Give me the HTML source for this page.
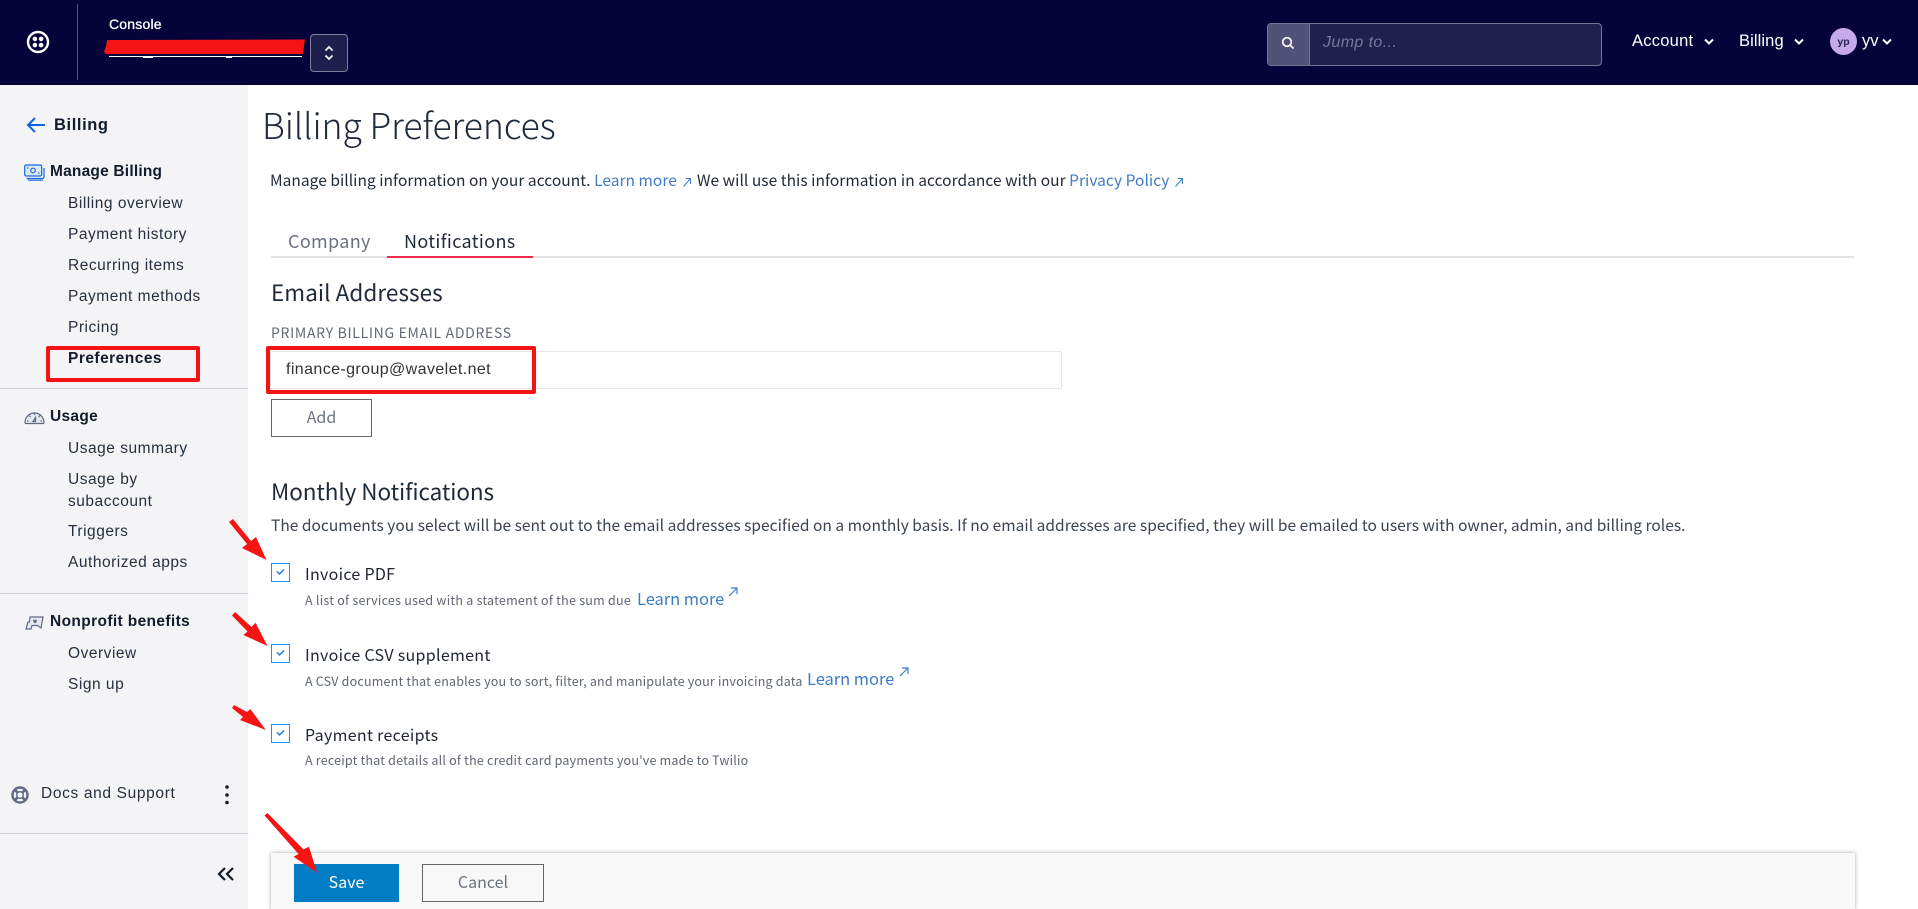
<!DOCTYPE html>
<html lang="en"><head><meta charset="utf-8"><title>Billing Preferences</title>
<style>
html,body{margin:0;padding:0;width:1918px;height:909px;overflow:hidden;background:#fff}
body{position:relative;font-family:"Liberation Sans",sans-serif;color:#121c2d}
.a{position:absolute}
.t{position:absolute;white-space:nowrap;line-height:20px;height:20px}
.side{font-size:15.5px;color:#263040;letter-spacing:.52px;left:68px}
.b{font-weight:700;color:#121c2d}
.m{font-family:"Noto Sans CJK JP","Liberation Sans",sans-serif}
.l{color:#3f7cc4}
.sub{left:305px;font-size:12.5px;color:#5f6670;letter-spacing:.2px}
.chk{left:305px;font-size:16px;color:#1f2630;letter-spacing:.3px}
.cb{position:absolute;left:271px;width:17px;height:17px;border:1px solid #1a94f0;background:#fff}
.ln{position:absolute;left:0;width:248px;height:1px;background:#cfcfdc}
.ar{display:inline-block;vertical-align:-1px}
</style></head><body>
<div class="a" style="left:0;top:0;width:1918px;height:85px;background:#06033a"></div>
<div class="a" style="left:0;top:85px;width:248px;height:824px;background:#f4f4f6"></div>

<svg class="a" style="left:24px;top:28px" width="28" height="28" viewBox="0 0 28 28"><circle cx="14" cy="14" r="10" fill="none" stroke="#fff" stroke-width="2.4"/><circle cx="10.900" cy="10.900" r="2.300" fill="#fff"/><circle cx="17.100" cy="10.900" r="2.300" fill="#fff"/><circle cx="10.900" cy="17.100" r="2.300" fill="#fff"/><circle cx="17.100" cy="17.100" r="2.300" fill="#fff"/></svg>
<div class="a" style="left:77px;top:4px;width:1px;height:76px;background:#55537a"></div>
<div class="t" style="left:109px;top:14px;font-size:14px;color:#fff;letter-spacing:.2px;-webkit-text-stroke:.3px #fff">Console</div>
<div class="a" style="left:109px;top:56px;width:193px;height:1px;background:#fff"></div>
<div class="a" style="left:143px;top:56px;width:10px;height:2px;background:#fff"></div>
<div class="a" style="left:226px;top:56px;width:6px;height:2px;background:#fff"></div>
<svg class="a" style="left:103px;top:38px" width="204" height="18"><polygon points="4,2 202,1.500 201,8 200,16 3,16 1,14 3,8" fill="#f51414"/></svg>
<div class="a" style="left:310px;top:34px;width:36px;height:36px;border:1px solid #7f7e9b;border-radius:4px;background:#1f1f4e"></div>
<svg class="a" style="left:322px;top:44px" width="14" height="18" fill="none" stroke="#fff" stroke-width="1.700"><path d="M3.500 6.500 7 3l3.500 3.500M3.500 11.500 7 15l3.500-3.500"/></svg>

<div class="a" style="left:1267px;top:23px;width:333px;height:41px;border:1px solid #74739a;border-radius:4px;background:#20204f"></div>
<div class="a" style="left:1268px;top:24px;width:41px;height:41px;border-right:1px solid #74739a;border-radius:3px 0 0 3px;background:#525177"></div>
<svg class="a" style="left:1280px;top:35px" width="16" height="16" fill="none" stroke="#fff" stroke-width="1.700"><circle cx="7" cy="7" r="4.300"/><path d="m10.200 10.200 3.300 3.300"/></svg>
<div class="t" style="left:1323px;top:33px;font-size:16px;font-style:italic;color:#77779a;letter-spacing:.4px">Jump to...</div>
<div class="t" style="left:1632px;top:31px;font-size:16.500px;color:#fff;letter-spacing:.25px">Account</div>
<svg class="a" style="left:1703px;top:37px" width="12" height="10" fill="none" stroke="#fff" stroke-width="2"><path d="m2 2.500 4 4 4-4"/></svg>
<div class="t" style="left:1739px;top:31px;font-size:16.500px;color:#fff;letter-spacing:.1px">Billing</div>
<svg class="a" style="left:1793px;top:37px" width="12" height="10" fill="none" stroke="#fff" stroke-width="2"><path d="m2 2.500 4 4 4-4"/></svg>
<div class="a" style="left:1830px;top:28px;width:27px;height:27px;border-radius:50%;background:#c5a9ec"></div>
<div class="t" style="left:1830px;top:32px;width:27px;text-align:center;font-size:10.500px;font-weight:700;color:#2a2450">yp</div>
<div class="t" style="left:1862px;top:31px;font-size:16.500px;color:#fff">yv</div>
<svg class="a" style="left:1881px;top:37px" width="12" height="10" fill="none" stroke="#fff" stroke-width="2"><path d="m2 2.500 4 4 4-4"/></svg>

<svg class="a" style="left:26px;top:116px" width="20" height="18" fill="none" stroke="#0f62e0" stroke-width="2"><path d="M19 9H2M9 2 2 9l7 7"/></svg>
<div class="t b" style="left:54px;top:115px;font-size:16.500px;letter-spacing:.6px">Billing</div>
<svg class="a" style="left:24px;top:164px" width="21" height="17" fill="none" stroke="#1769d8" stroke-width="1.200"><rect x=".7" y="1" width="17" height="11" rx="1.500" fill="#dbe8fa"/><circle cx="9" cy="6.500" r="2.300"/><path d="M3 4h1.500M14 9h1.500M2.500 14.500H18.500a1.500 1.500 0 0 0 1.500-1.500V4M4 16.200h15"/></svg>
<div class="t b" style="left:50px;top:162px;font-size:15.500px;letter-spacing:.2px">Manage Billing</div>
<div class="t side" style="top:194px">Billing overview</div>
<div class="t side" style="top:225px">Payment history</div>
<div class="t side" style="top:256px">Recurring items</div>
<div class="t side" style="top:287px">Payment methods</div>
<div class="t side" style="top:318px">Pricing</div>
<div class="t side b" style="top:349px;letter-spacing:.48px">Preferences</div>
<div class="a" style="left:46px;top:346px;width:146px;height:28px;border:4px solid #f51414;border-radius:2px"></div>
<div class="ln" style="top:388px"></div>

<svg class="a" style="left:24px;top:409px" width="21" height="16" fill="none" stroke="#5f6b85" stroke-width="1.200"><path d="M1 13.500a9.500 9.500 0 1 1 19 0 1 1 0 0 1-1 1H2a1 1 0 0 1-1-1Z" fill="#e6e8f0"/><path d="M10.500 4v2M5 6.500l1.500 1.500M16 6.500 14.500 8M3 12h1.500M16.500 12H18M9 12.500l2.500-4 0 4z"/></svg>
<div class="t b" style="left:50px;top:407px;font-size:15.500px;letter-spacing:.3px">Usage</div>
<div class="t side" style="top:439px">Usage summary</div>
<div class="t side" style="top:470px">Usage by</div>
<div class="t side" style="top:492px">subaccount</div>
<div class="t side" style="top:522px">Triggers</div>
<div class="t side" style="top:553px">Authorized apps</div>
<div class="ln" style="top:593px"></div>

<svg class="a" style="left:25px;top:615px" width="19" height="16" fill="none" stroke="#5f6b85" stroke-width="1.200"><path d="M5 2h13l-2 11-3.500-2.500H7L6 14H1l2-7h1.500z" fill="#e6e8f0"/><path d="M8 5.500a1 1 0 0 1 2 .3 1 1 0 0 1 2-.3c0 1.500-2 3-2 3s-2-1.500-2-3z" fill="#5f6b85" stroke="none"/></svg>
<div class="t b" style="left:50px;top:612px;font-size:15.500px;letter-spacing:.37px">Nonprofit benefits</div>
<div class="t side" style="top:644px">Overview</div>
<div class="t side" style="top:675px">Sign up</div>

<svg class="a" style="left:10px;top:785px" width="20" height="20" fill="none" stroke="#5f6b85"><circle cx="10" cy="10" r="7.500" stroke-width="2.400"/><circle cx="10" cy="10" r="3.300" stroke-width="1.400"/><path d="m4.500 4.500 3 3M15.500 4.500l-3 3M4.500 15.500l3-3M15.500 15.500l-3-3" stroke-width="2.600"/></svg>
<div class="t side" style="left:41px;top:784px;letter-spacing:.65px">Docs and Support</div>
<svg class="a" style="left:224px;top:784px" width="6" height="22" fill="#121c2d"><circle cx="3" cy="3" r="1.800"/><circle cx="3" cy="11" r="1.800"/><circle cx="3" cy="18.500" r="1.800"/></svg>
<div class="ln" style="top:833px"></div>
<svg class="a" style="left:216px;top:866px" width="20" height="16" fill="none" stroke="#121c2d" stroke-width="2.200"><path d="M9 2 3 8l6 6M17 2l-6 6 6 6"/></svg>

<div class="t m" style="left:262px;top:100px;height:50px;line-height:50px;font-size:35.500px;font-weight:300;color:#1e2a3a;letter-spacing:-.08px">Billing Preferences</div>
<div class="t m" style="left:270px;top:170px;font-size:15.500px;color:#1e2a3a;letter-spacing:.04px">Manage billing information on your account. <span class="l">Learn more</span><svg class="ar" style="margin:0 6px" width="8" height="10" fill="none" stroke="#3f7cc4" stroke-width="1"><path d="M.5 9.500 7.500 1.500M2.500 1.500h5v5.500"/></svg>We will use this information in accordance with our <span class="l">Privacy Policy</span><svg class="ar" style="margin-left:6px" width="8" height="10" fill="none" stroke="#3f7cc4" stroke-width="1"><path d="M.5 9.500 7.500 1.500M2.500 1.500h5v5.500"/></svg></div>
<div class="t m" style="left:288px;top:231px;font-size:18px;color:#6b7280;letter-spacing:.33px">Company</div>
<div class="t m" style="left:404px;top:231px;font-size:18px;color:#1e2a3a;letter-spacing:.35px">Notifications</div>
<div class="a" style="left:271px;top:256px;width:1583px;height:2px;background:#e3e3e3"></div>
<div class="a" style="left:387px;top:256px;width:146px;height:2px;background:#ef2d4a"></div>

<div class="t m" style="left:271px;top:277px;height:30px;line-height:30px;font-size:22.500px;color:#1e2a3a;letter-spacing:.05px">Email Addresses</div>
<div class="t m" style="left:271px;top:323px;font-size:14px;color:#626a75;letter-spacing:.68px">PRIMARY BILLING EMAIL ADDRESS</div>
<div class="a" style="left:270px;top:351px;width:790px;height:36px;border:1px solid #e6e6e6"></div>
<div class="t" style="left:286px;top:360px;font-size:16px;color:#333;letter-spacing:.4px">finance-group@wavelet.net</div>
<div class="a" style="left:266px;top:346px;width:262px;height:40px;border:4px solid #f51414;border-radius:2px"></div>
<div class="a" style="left:271px;top:399px;width:99px;height:36px;border:1px solid #666"></div>
<div class="t m" style="left:271px;top:406px;width:101px;text-align:center;font-size:16px;color:#6b7280">Add</div>

<div class="t m" style="left:271px;top:476px;height:30px;line-height:30px;font-size:22.500px;color:#1e2a3a;letter-spacing:-.08px">Monthly Notifications</div>
<div class="t m" style="left:271px;top:515px;font-size:15.500px;color:#3a4452;letter-spacing:.03px">The documents you select will be sent out to the email addresses specified on a monthly basis. If no email addresses are specified, they will be emailed to users with owner, admin, and billing roles.</div>

<div class="cb" style="top:563px"></div>
<svg class="a" style="left:274px;top:566px" width="13" height="12" fill="none" stroke="#1a7ce0" stroke-width="1.500"><path d="m3 5.500 2.500 2.500 4.500-4.500"/></svg>
<div class="t m chk" style="top:563px">Invoice PDF</div>
<div class="t m sub" style="top:590px;letter-spacing:.25px">A list of services used with a statement of the sum due</div>
<div class="t m l" style="left:637px;top:588px;font-size:16.500px;letter-spacing:-.05px">Learn more</div>
<svg class="a" style="left:727px;top:586px" width="12" height="12" fill="none" stroke="#3f7cc4" stroke-width="1.200"><path d="M2 10 10 2M4 2h6v6"/></svg>

<div class="cb" style="top:644px"></div>
<svg class="a" style="left:274px;top:647px" width="13" height="12" fill="none" stroke="#1a7ce0" stroke-width="1.500"><path d="m3 5.500 2.500 2.500 4.500-4.500"/></svg>
<div class="t m chk" style="top:644px">Invoice CSV supplement</div>
<div class="t m sub" style="top:671px">A CSV document that enables you to sort, filter, and manipulate your invoicing data</div>
<div class="t m l" style="left:807px;top:668px;font-size:16.500px;letter-spacing:-.05px">Learn more</div>
<svg class="a" style="left:898px;top:666px" width="12" height="12" fill="none" stroke="#3f7cc4" stroke-width="1.200"><path d="M2 10 10 2M4 2h6v6"/></svg>

<div class="cb" style="top:724px"></div>
<svg class="a" style="left:274px;top:727px" width="13" height="12" fill="none" stroke="#1a7ce0" stroke-width="1.500"><path d="m3 5.500 2.500 2.500 4.500-4.500"/></svg>
<div class="t m chk" style="top:724px">Payment receipts</div>
<div class="t m sub" style="top:750px">A receipt that details all of the credit card payments you've made to Twilio</div>

<div class="a" style="left:271px;top:853px;width:1584px;height:56px;background:#f8f8f8;box-shadow:0 0 4px rgba(0,0,0,.35)"></div>
<div class="a" style="left:294px;top:864px;width:105px;height:38px;background:#027cc5"></div>
<div class="t m" style="left:294px;top:871px;width:105px;text-align:center;font-size:16px;color:#fff">Save</div>
<div class="a" style="left:422px;top:864px;width:120px;height:36px;border:1px solid #666"></div>
<div class="t m" style="left:422px;top:871px;width:122px;text-align:center;font-size:16px;color:#6b7280">Cancel</div>

<svg class="a" style="left:0;top:0;pointer-events:none" width="1918" height="909" fill="#f51414">
<path d="M229 522 233 519 251 541 256 537 266.500 560 242 548 247 544Z"/>
<path d="M232 615.500 235 612 251.500 627 255.500 622.700 267.500 646 243.400 635 247.500 631.500Z"/>
<path d="M232 708 234 705 247 712 250.300 709 265.800 730 240 720 243 717Z"/>
<path d="M264.500 815.500 267.500 813 303.500 849.500 309 846.700 317 872.700 293.600 856.700 298.500 854Z"/>
</svg>
</body></html>
